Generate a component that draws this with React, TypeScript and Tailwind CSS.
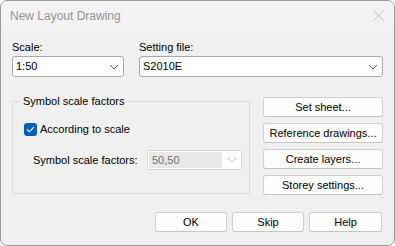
import { X } from 'lucide-react';

function Chevron({ color = '#606060' }: { color?: string }) {
  return (
    <svg width="10" height="6" viewBox="0 0 10 6" fill="none">
      <path d="M1 1 L5 5 L9 1" stroke={color} strokeWidth="1" />
    </svg>
  );
}

function Combo({ value, width }: { value: string; width: string }) {
  return (
    <div
      className={`${width} h-[21px] flex items-center justify-between bg-white border border-[#a9a9a9] rounded-[3px] pl-[3px] pr-[4px]`}
    >
      <span>{value}</span>
      <Chevron />
    </div>
  );
}

function Button({ label, width = 'w-full' }: { label: string; width?: string }) {
  return (
    <button
      className={`${width} h-[20px] flex items-center justify-center bg-[#fdfdfd] border border-[#d0d0d0] border-b-[#c4c4c4] rounded-[3px] text-black`}
    >
      {label}
    </button>
  );
}

export default function App() {
  return (
    <div className="w-[395px] h-[246px] bg-white">
      <div
        className="w-[395px] h-[246px] flex flex-col bg-[#f0f0f0] border border-[#9a9a9a] rounded-[7px] overflow-hidden text-[11px] leading-[13px] text-black"
        style={{ fontFamily: '"Liberation Sans", Arial, sans-serif' }}
      >
        {/* Title bar */}
        <div className="h-[29px] shrink-0 flex items-center justify-between pl-[9px] pr-[5px] bg-[#f3f3f3]">
          <span className="text-[12px] text-[#939393] mt-[1px]">New Layout Drawing</span>
          <X size={21} strokeWidth={0.55} color="#8a8a8a" />
        </div>

        <div className="flex flex-col px-[11px] pt-[11px]">
          {/* Scale + setting file */}
          <div className="flex gap-[15px]">
            <div className="flex flex-col gap-[2px]">
              <span>Scale:</span>
              <Combo value="1:50" width="w-[112px]" />
            </div>
            <div className="flex flex-col gap-[2px]">
              <span>Setting file:</span>
              <Combo value="S2010E" width="w-[244px]" />
            </div>
          </div>

          {/* Middle row */}
          <div className="flex gap-[13px] mt-[20px]">
            <fieldset className="w-[238px] h-[99px] mt-[-2px] border border-[#dcdcdc] rounded-[1px] px-0">
              <legend className="ml-[7px] px-[3px]">Symbol scale factors</legend>
              <div className="flex items-center gap-[3px] ml-[11px] mt-[15px]">
                <div className="w-[13px] h-[13px] rounded-[3px] bg-[#005fb8] flex items-center justify-center">
                  <svg width="9" height="7" viewBox="0 0 9 7" fill="none">
                    <path d="M1 3.5 L3.3 5.8 L8 1" stroke="white" strokeWidth="1.1" />
                  </svg>
                </div>
                <span>According to scale</span>
              </div>
              <div className="flex items-center ml-[20px] mt-[14px]">
                <span className="w-[114px]">Symbol scale factors:</span>
                <div className="w-[95px] h-[20px] flex items-center justify-between bg-white border border-[#dadada] rounded-[2px] pl-[1px] pr-[4px]">
                  <div className="w-[73px] h-[16px] bg-[#e8e8e8] flex items-center pl-[3px] text-[#707070]">50,50</div>
                  <Chevron color="#c2c2c2" />
                </div>
              </div>
            </fieldset>

            <div className="w-[120px] flex flex-col gap-[6px]">
              <Button label="Set sheet..." />
              <Button label="Reference drawings..." />
              <Button label="Create layers..." />
              <Button label="Storey settings..." />
            </div>
          </div>

          {/* Bottom buttons */}
          <div className="flex justify-end gap-[5px] mt-[17px] mr-[1px]">
            <Button label="OK" width="w-[72px]" />
            <Button label="Skip" width="w-[72px]" />
            <Button label="Help" width="w-[73px]" />
          </div>
        </div>
      </div>
    </div>
  );
}
